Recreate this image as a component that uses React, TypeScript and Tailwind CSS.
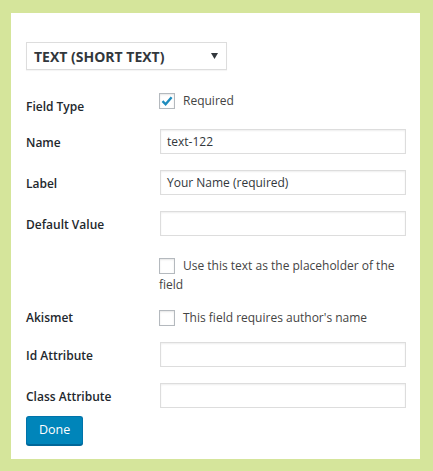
import React from "react";

const font = { fontFamily: '"Open Sans", "Noto Sans", sans-serif' };

function Checkbox({ checked = false, className = "" }: { checked?: boolean; className?: string }) {
  return (
    <span
      className={`inline-flex w-4 h-4 items-center justify-center border border-[#b4b9be] bg-white shadow-[inset_0_1px_2px_rgba(0,0,0,0.1)] ${className}`}
    >
      {checked && (
        <svg width="14" height="14" viewBox="0 0 14 14">
          <path d="M2.5 7.2 L5.6 10.3 L11.6 3.2" fill="none" stroke="#1e8cbe" strokeWidth="2.4" />
        </svg>
      )}
    </span>
  );
}

function TextInput({ value = "" }: { value?: string }) {
  return (
    <div className="w-[246px] h-[25px] border border-[#ddd] bg-white shadow-[inset_0_1px_2px_rgba(0,0,0,0.07)] px-[6px] flex items-center text-[12px] text-[#32373c]">
      {value}
    </div>
  );
}

function InputRow({ label, value, className = "" }: { label: string; value?: string; className?: string }) {
  return (
    <div className={`flex items-center h-[25px] ${className}`}>
      <div className="w-[134px] pt-[2px] font-semibold text-[12px] text-[#23282d]">{label}</div>
      <TextInput value={value} />
    </div>
  );
}

export default function App() {
  return (
    <div className="w-[433px] h-[471px] bg-[#d5e59b] pt-[13px] pl-[11px]" style={font}>
      <div className="w-[409px] h-[446px] bg-white pt-[29px] pl-[15px] pr-[14px] pb-[14px]">
        <div className="w-[201px] h-[28px] border border-[#ddd] flex items-center justify-between pl-[7px] pr-[8px] shadow-[0_1px_1px_rgba(0,0,0,0.04)]">
          <span className="font-bold text-[14px] text-[#32373c]">TEXT (SHORT TEXT)</span>
          <svg width="7" height="6" viewBox="0 0 7 6">
            <path d="M0 0 H7 L3.5 6 Z" fill="#32373c" />
          </svg>
        </div>

        <div className="flex mt-[23px]">
          <div className="w-[133px] pt-[4px] leading-[20px] font-semibold text-[12px] text-[#23282d]">Field Type</div>
          <div className="flex items-center h-4 gap-2 text-[12px] text-[#444]">
            <Checkbox checked />
            <span>Required</span>
          </div>
        </div>

        <InputRow label="Name" value="text-122" className="mt-[12px]" />
        <InputRow label="Label" value="Your Name (required)" className="mt-[16px]" />
        <InputRow label="Default Value" className="mt-[16px]" />

        <div className="flex mt-[20px]">
          <div className="w-[133px]" />
          <div className="w-[241px] text-[12px] leading-[19px] text-[#444]">
            <Checkbox className="float-left mt-[2px] mr-2" />
            Use this text as the placeholder of the field
          </div>
        </div>

        <div className="flex items-center h-4 mt-[16px]">
          <div className="w-[133px] font-semibold text-[12px] text-[#23282d]">Akismet</div>
          <div className="flex items-center gap-2 text-[12px] text-[#444]">
            <Checkbox />
            <span>This field requires author's name</span>
          </div>
        </div>

        <InputRow label="Id Attribute" className="mt-[16px]" />
        <InputRow label="Class Attribute" className="mt-[16px]" />

        <button className="mt-[8px] h-[29px] px-[12px] rounded-[3px] bg-[#0085ba] border border-[#0073aa] border-b-[#006799] shadow-[0_1px_0_#006799] text-white text-[12.5px] leading-none">
          Done
        </button>
      </div>
    </div>
  );
}
